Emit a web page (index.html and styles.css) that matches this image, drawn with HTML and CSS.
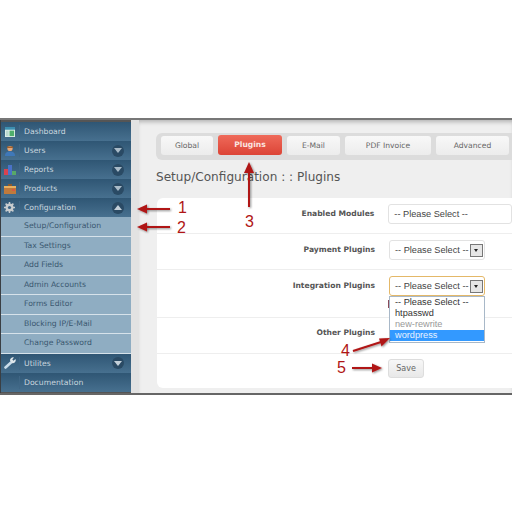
FILE: index.html
```html
<!DOCTYPE html>
<html lang="en">
<head>
    <meta charset="UTF-8">
    <title>Setup/Configuration : : Plugins</title>
    <link rel="stylesheet" href="styles.css">
</head>
<body>
    <div class="shot">
        <!-- Left menu -->
        <div class="sidebar">
            <div class="nav-item">
                <span class="nav-icon"><svg width="10" height="10" viewBox="0 0 11 11"><rect width="11" height="11" fill="#dfeee8"/><rect width="11" height="3" fill="#3d8fb0"/><rect x="1" y="4" width="3" height="6" fill="#bcd8d0"/><rect x="5" y="4" width="5" height="6" fill="#4fae6c"/></svg></span>
                <span class="nav-label">Dashboard</span>
            </div>
            <div class="nav-item">
                <span class="nav-icon"><svg width="12" height="12" viewBox="0 0 12 12"><circle cx="6" cy="3.500" r="2.600" fill="#e8a878"/><path d="M1 11c0-3.500 2-4.500 5-4.500s5 1 5 4.500z" fill="#3f78b8"/><path d="M3 3h6V1.500H3z" fill="#a0602c"/></svg></span>
                <span class="nav-label">Users</span>
                <span class="toggle"><svg width="8" height="5" viewBox="0 0 8 5"><path d="M0 0h8L4 5z" fill="#a9bbc8"/></svg></span>
            </div>
            <div class="nav-item">
                <span class="nav-icon"><svg width="12" height="11" viewBox="0 0 12 11"><rect y="5" width="4" height="6" fill="#d8434f"/><rect x="4" y="1" width="4" height="10" fill="#4a72c8"/><rect x="8" y="7" width="4" height="4" fill="#58a868"/></svg></span>
                <span class="nav-label">Reports</span>
                <span class="toggle"><svg width="8" height="5" viewBox="0 0 8 5"><path d="M0 0h8L4 5z" fill="#a9bbc8"/></svg></span>
            </div>
            <div class="nav-item">
                <span class="nav-icon"><svg width="12" height="10" viewBox="0 0 12 10"><rect y="2" width="12" height="8" fill="#c07a3c"/><rect y="2" width="12" height="2" fill="#e8b060"/><rect x="4" width="4" height="2" fill="#8a5a30"/><rect x="8" y="5" width="3" height="2" fill="#d85a40"/></svg></span>
                <span class="nav-label">Products</span>
                <span class="toggle"><svg width="8" height="5" viewBox="0 0 8 5"><path d="M0 0h8L4 5z" fill="#a9bbc8"/></svg></span>
            </div>
            <div class="nav-item">
                <span class="nav-icon"><svg width="11" height="11" viewBox="0 0 11 11"><circle cx="5.500" cy="5.500" r="2.800" fill="none" stroke="#c8ccce" stroke-width="2.400"/><path d="M5.500 0v11M0 5.500h11M1.600 1.600l7.800 7.800M9.400 1.600l-7.800 7.800" stroke="#c8ccce" stroke-width="1.500"/><circle cx="5.500" cy="5.500" r="1.600" fill="#3b6485"/></svg></span>
                <span class="nav-label">Configuration</span>
                <span class="toggle"><svg width="8" height="5" viewBox="0 0 8 5"><path d="M0 5h8L4 0z" fill="#c4d0d9"/></svg></span>
            </div>
            <div class="sub-item">Setup/Configuration</div>
            <div class="sub-item">Tax Settings</div>
            <div class="sub-item">Add Fields</div>
            <div class="sub-item">Admin Accounts</div>
            <div class="sub-item">Forms Editor</div>
            <div class="sub-item">Blocking IP/E-Mail</div>
            <div class="sub-item">Change Password</div>
            <div class="nav-item">
                <span class="nav-icon"><svg width="12" height="12" viewBox="0 0 12 12"><path d="M1.500 10.500L7 5.500" stroke="#c9dcea" stroke-width="2.600" stroke-linecap="round"/><path d="M6 3.500A3 3 0 0 1 10 .5L8.300 2.500 9.500 3.800 11.500 2A3 3 0 0 1 7.800 6z" fill="#dfe6ea"/></svg></span>
                <span class="nav-label">Utilites</span>
                <span class="toggle"><svg width="8" height="5" viewBox="0 0 8 5"><path d="M0 0h8L4 5z" fill="#c4d0d9"/></svg></span>
            </div>
            <div class="nav-item">
                <span class="nav-icon"></span>
                <span class="nav-label">Documentation</span>
            </div>
        </div>

        <!-- Main area -->
        <div class="main">
            <div class="tabs">
                <div class="tab tab-global">Global</div>
                <div class="tab tab-active">Plugins</div>
                <div class="tab tab-email">E-Mail</div>
                <div class="tab tab-pdf">PDF Invoice</div>
                <div class="tab tab-advanced">Advanced</div>
            </div>
            <h1>Setup/Configuration : : Plugins</h1>
            <div class="card">
                <div class="form-row">
                    <label>Enabled Modules</label>
                    <div class="select select-wide">-- Please Select --</div>
                </div>
                <div class="form-row">
                    <label>Payment Plugins</label>
                    <div class="select">-- Please Select --<span class="select-btn"></span></div>
                </div>
                <div class="form-row row-open">
                    <label>Integration Plugins</label>
                    <div class="select select-focus">-- Please Select --<span class="select-btn"></span>
                        <span class="peek"></span>
                        <div class="dropdown">
                            <div class="option">-- Please Select --</div>
                            <div class="option">htpasswd</div>
                            <div class="option option-off">new-rewrite</div>
                            <div class="option option-on">wordpress</div>
                        </div>
                    </div>
                </div>
                <div class="form-row row-other">
                    <label>Other Plugins</label>
                </div>
                <div class="save-row">
                    <button class="save-btn">Save</button>
                </div>
            </div>
        </div>

        <!-- Red annotations drawn over the screenshot -->
        <svg class="arrows" width="512" height="273" viewBox="0 0 512 273">
            <defs>
                <filter id="soft"><feDropShadow dx="1" dy="1" stdDeviation="0.8" flood-color="#000" flood-opacity="0.45"/></filter>
            </defs>
            <g fill="#b01515" stroke="#b01515" filter="url(#soft)">
                <path d="M146 89h24" stroke-width="2"/><path d="M137 89l10-4.500v9z" stroke="none"/>
                <path d="M146 107h24" stroke-width="2"/><path d="M137 107l10-4.500v9z" stroke="none"/>
                <path d="M249 52v35" stroke-width="2"/><path d="M249 42l-5 11h10z" stroke="none"/>
                <path d="M353 231l28-9" stroke-width="2"/><path d="M390 218l-11 .5 2.500 8z" stroke="none"/>
                <path d="M352 248h21" stroke-width="2"/><path d="M382 248l-10-4.500v9z" stroke="none"/>
            </g>
        </svg>
        <span class="mark mark-1">1</span>
        <span class="mark mark-2">2</span>
        <span class="mark mark-3">3</span>
        <span class="mark mark-4">4</span>
        <span class="mark mark-5">5</span>
    </div>
</body>
</html>
```

FILE: styles.css
```css
* {
    box-sizing: border-box;
}

body {
    margin: 0;
    background: white;
    font-family: 'DejaVu Sans', sans-serif;
}

.shot {
    position: relative;
    display: flex;
    width: 512px;
    height: 277px;
    margin-top: 118px;
    border-top: 2px solid #777;
    border-bottom: 2px solid #666;
    background: #efefef;
    overflow: hidden;
}

/* Left menu */
.sidebar {
    width: 131px;
    flex-shrink: 0;
    padding-top: 2px;
    background: #555;
    border-left: 1px solid #3a3f44;
}

.nav-item {
    display: flex;
    align-items: center;
    height: 19px;
    padding-left: 2px;
    background: linear-gradient(#2f5674, #47708f);
    color: #c9d6df;
    font-size: 7.7px;
}

.nav-icon {
    display: flex;
    align-items: center;
    justify-content: center;
    width: 13px;
    height: 100%;
}

.nav-label {
    margin-left: 3px;
    padding-left: 4px;
    border-left: 1px solid #3f6685;
    line-height: 13px;
}

.toggle {
    display: flex;
    align-items: center;
    justify-content: center;
    width: 12px;
    height: 12px;
    margin-left: auto;
    margin-right: 7px;
    border-radius: 50%;
    background: #2a4a64;
}

.sub-item {
    height: 19.5px;
    padding-left: 23px;
    background: #8fadc2;
    border-bottom: 1px solid #d6e2ea;
    color: #3a5870;
    font-size: 7.7px;
    line-height: 18px;
}

/* Main area */
.main {
    flex: 1;
    padding: 13px 0 0 17px;
    border-left: 8px solid #e2e2e2;
    min-width: 0;
    box-shadow: inset 0 4px 4px -2px rgba(0, 0, 0, 0.25);
}

.tabs {
    display: flex;
    gap: 5px;
    width: 356px;
    height: 27px;
    padding: 3px 0 0 5px;
    background: #dcdcdc;
    border-radius: 6px 0 0 6px;
}

.tab {
    height: 19px;
    flex-shrink: 0;
    background: linear-gradient(#f8f8f8, #ececec);
    border-radius: 3px;
    color: #666;
    font-size: 7.6px;
    line-height: 19px;
    text-align: center;
}

.tab-global { width: 52px; }
.tab-email { width: 53px; }
.tab-pdf { width: 86px; }
.tab-advanced { width: 73px; }

.tab-active {
    width: 64px;
    height: 20px;
    margin-top: -1px;
    background: linear-gradient(#ef6a5a, #dc4436);
    color: #fbe6e2;
    font-weight: bold;
    line-height: 20px;
}

h1 {
    margin: 9px 0 13px;
    color: #555;
    font-size: 12.1px;
    font-weight: normal;
    line-height: 16px;
}

.card {
    height: 190px;
    margin-left: 1px;
    background: white;
    border-radius: 6px 0 0 6px;
}

.form-row {
    display: flex;
    height: 36px;
    padding-top: 6px;
    border-bottom: 1px solid #eeeeee;
}

.row-open {
    height: 48px;
}

.row-other {
    padding-top: 5px;
}

.form-row label {
    width: 218px;
    padding-top: 4.500px;
    color: #555;
    font-size: 7.6px;
    font-weight: bold;
    text-align: right;
}

.select {
    position: relative;
    display: flex;
    align-items: center;
    justify-content: space-between;
    width: 96px;
    height: 20px;
    margin-left: 14px;
    padding: 0 1px 0 5px;
    border: 1px solid #e2e2e2;
    border-radius: 3px;
    color: #444;
    font-family: 'Liberation Sans', sans-serif;
    font-size: 9.2px;
    white-space: nowrap;
}

.select-wide {
    width: 124px;
}

.select-focus {
    border: 1px solid #e4b868;
}

.select-btn {
    position: relative;
    width: 13px;
    height: 13px;
    background: #e6e6e6;
    border: 1px solid #777;
}

.select-btn::after {
    content: '';
    position: absolute;
    left: 3px;
    top: 4px;
    border: 2.500px solid transparent;
    border-top: 3px solid #222;
}

.peek {
    position: absolute;
    left: -2px;
    top: 23px;
    width: 1px;
    height: 8px;
    background: #8a4a5a;
}

.dropdown {
    position: absolute;
    left: -1px;
    top: 19px;
    width: 96px;
    height: 47px;
    background: white;
    border: 1px solid #a8b8c8;
    z-index: 2;
}

.option {
    height: 11px;
    padding-left: 5px;
    color: #333;
    line-height: 11px;
}

.option-off {
    color: #999;
}

.option-on {
    background: #3399ff;
    color: #e8f2ff;
}

.save-row {
    padding: 5px 0 0 231px;
}

.save-btn {
    display: block;
    width: 36px;
    height: 19px;
    padding: 0;
    background: linear-gradient(#f7f7f7, #e8e8e8);
    border: 1px solid #ddd;
    border-radius: 3px;
    color: #666;
    font-family: 'DejaVu Sans', sans-serif;
    font-size: 8px;
}

/* Annotations */
.arrows {
    position: absolute;
    left: 0;
    top: 0;
    z-index: 3;
}

.mark {
    position: absolute;
    color: #b01515;
    font-family: 'Liberation Sans', sans-serif;
    font-size: 16px;
    line-height: 16px;
    z-index: 3;
}

.mark-1 { left: 178px; top: 80px; }
.mark-2 { left: 177px; top: 100px; }
.mark-3 { left: 245px; top: 94px; }
.mark-4 { left: 341px; top: 223px; }
.mark-5 { left: 337px; top: 240px; }
```
